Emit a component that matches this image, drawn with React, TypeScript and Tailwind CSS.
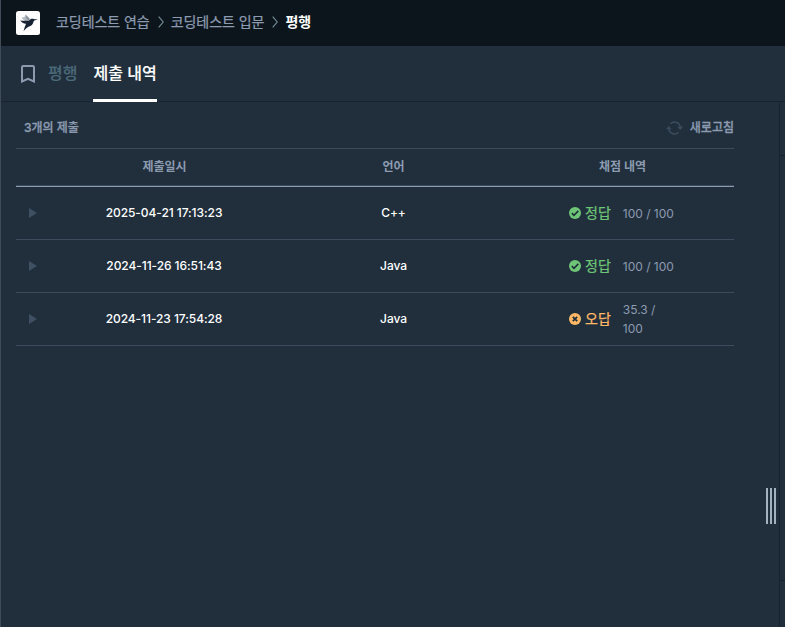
import type { ReactNode } from 'react';

type Submission = { date: string; language: string; passed: boolean; score: string };

const submissions: Submission[] = [
  { date: '2025-04-21 17:13:23', language: 'C++', passed: true, score: '100 / 100' },
  { date: '2024-11-26 16:51:43', language: 'Java', passed: true, score: '100 / 100' },
  { date: '2024-11-23 17:54:28', language: 'Java', passed: false, score: '35.3 / 100' },
];

function Logo() {
  return (
    <svg className="h-6 w-6 shrink-0" viewBox="0 0 24 24">
      <rect width="24" height="24" rx="2.5" fill="#fff" />
      <path d="M5.6 6.9 9 5.6l.3-2.2 4.2 4.2.2 2.2-3.9.8Z" fill="#b4bac2" />
      <path d="m9.3 3.4 4.2 4.2-.2 2.2-2.7-1.8Z" fill="#8b939e" />
      <path d="M4.3 9.6c3 .3 5.6.2 8.6.1 1.2-1.7 2.8-2.3 4.2-1.9.9.4 1.6.6 5 .7-2.4.4-3.6.8-4.4 1.7-.6 3.2-2.3 4.9-5.2 5.5-1.6.9-3.1 2.5-5 4.5l1.4-4.8c.5-.9 1-1.7 1.1-2.6-2.6-.2-4.5-1.3-5.7-3.2Z" fill="#172334" />
    </svg>
  );
}

function Chevron() {
  return (
    <svg className="ml-2 mr-[7px] h-3 w-1.5 shrink-0" viewBox="0 0 6 12" fill="none" stroke="#78909c" strokeWidth="1.1">
      <path d="m.7.7 4.5 5.3L.7 11.3" />
    </svg>
  );
}

function Verdict({ passed }: { passed: boolean }) {
  return (
    <svg className="h-3 w-3 shrink-0" viewBox="0 0 12 12" fill="none">
      <circle cx="6" cy="6" r="6" fill={passed ? '#6fc576' : '#ffb866'} />
      <path
        d={passed ? 'm2.8 6.1 2.2 2.2 4.3-4.4' : 'm3.8 3.8 4.4 4.4M8.2 3.8 3.8 8.2'}
        stroke="#202f3d"
        strokeWidth="1.7"
      />
    </svg>
  );
}

function HeadCell({ children }: { children?: ReactNode }) {
  return <div className="text-center">{children}</div>;
}

export default function App() {
  return (
    <div className="flex h-[627px] w-[785px] flex-col overflow-hidden border-l border-[#3f4c57] bg-[#212f3d] font-['Inter','Noto_Sans_CJK_KR',sans-serif] text-white">
      <header className="flex h-[46px] shrink-0 items-center bg-[#0c151c] pl-[15px] text-sm tracking-[-0.05px] text-[#8c9bb0]">
        <Logo />
        <span className="mb-[3px] ml-4 whitespace-nowrap [-webkit-text-stroke:0.25px]">코딩테스트 연습</span>
        <span className="mb-[3px] flex"><Chevron /></span>
        <span className="mb-[3px] whitespace-nowrap [-webkit-text-stroke:0.25px]">코딩테스트 입문</span>
        <span className="mb-[3px] flex"><Chevron /></span>
        <span className="mb-[3px] font-bold text-white">평행</span>
      </header>

      <nav className="flex h-14 shrink-0 border-b border-[#172334] pl-5 text-base font-medium [-webkit-text-stroke:0.15px]">
        <svg className="mt-[19px] h-[18px] w-[14px]" viewBox="0 0 14 18" fill="none" stroke="#8c9bb0" strokeWidth="2">
          <path d="M1 16.5V2.2Q1 1 2.2 1h9.6Q13 1 13 2.2v14.3l-6-2.7Z" />
        </svg>
        <span className="ml-[13px] pt-[15px] leading-6 text-[#4b6a79]">평행</span>
        <span className="-mb-px ml-4 h-14 w-16 whitespace-nowrap border-b-[3px] border-white pt-[15px] leading-6">제출 내역</span>
      </nav>

      <div className="flex min-h-0 flex-1">
        <main className="w-[733px] shrink-0 pl-[15px]">
          <div className="flex h-[46px] items-center justify-between pl-2 pt-[5px] text-xs font-medium text-[#8c9bb0] [-webkit-text-stroke:0.3px]">
            <span>3개의 제출</span>
            <button className="flex items-center gap-[7px]">
              <svg className="h-4 w-[17px]" viewBox="0 0 17 16" fill="none" stroke="#3a4c5e" strokeWidth="1.5">
                <path d="M4.5 3.7A5.7 5.7 0 0 1 14.2 8M12.5 12.3A5.7 5.7 0 0 1 2.8 8" />
                <path d="M0 9.3 2.8 6l2.9 3.3ZM11.3 6.7H17L14.2 10Z" fill="#3a4c5e" stroke="none" />
              </svg>
              <span>새로고침</span>
            </button>
          </div>

          <div className="grid h-[39px] grid-cols-[34px_229px_229px_1fr] items-center border-b border-t border-b-[#8c9bb0] border-t-[#3a4c5e] pb-0.5 text-xs font-bold text-[#8c9bb0] shadow-[inset_0_-1px_0_#3a4c5e]">
            <HeadCell />
            <HeadCell>제출일시</HeadCell>
            <HeadCell>언어</HeadCell>
            <div className="pl-[3px] text-center">채점 내역</div>
          </div>

          {submissions.map((row) => (
            <div key={row.date} className="grid h-[53px] grid-cols-[34px_228px_230px_1fr] items-center border-b border-[#3a4c5e] text-xs">
              <svg className="ml-[13px] h-[10px] w-2" viewBox="0 0 8 10">
                <path d="M0 0v10l8-5Z" fill="#3f5063" />
              </svg>
              <span className="text-center font-medium tracking-[-0.07px]">{row.date}</span>
              <span className="pl-px text-center font-medium tracking-[-0.1px]">{row.language}</span>
              <div className="flex items-center pl-[61px]">
                <Verdict passed={row.passed} />
                <span className={`ml-1 whitespace-nowrap text-sm [-webkit-text-stroke:0.25px] ${row.passed ? 'text-[#6fc576]' : 'text-[#ffb866]'}`}>
                  {row.passed ? '정답' : '오답'}
                </span>
                <span className="ml-3 w-[52px] leading-[19px] text-[#8c9bb0]">{row.score}</span>
              </div>
            </div>
          ))}
        </main>

        <div className="flex w-[46px] shrink-0 items-start justify-end gap-0.5 border-r border-[#172334] pr-[3px] pt-[386px]">
          <i className="h-9 w-0.5 bg-[#a2b2be]" />
          <i className="h-9 w-0.5 bg-[#a2b2be]" />
          <i className="h-9 w-0.5 bg-[#a2b2be]" />
        </div>
        <aside className="flex flex-1 flex-col">
          <div className="h-[54px] border-b border-[#172334]" />
          <div className="h-[425px] border-b border-[#172334]" />
        </aside>
      </div>
    </div>
  );
}
